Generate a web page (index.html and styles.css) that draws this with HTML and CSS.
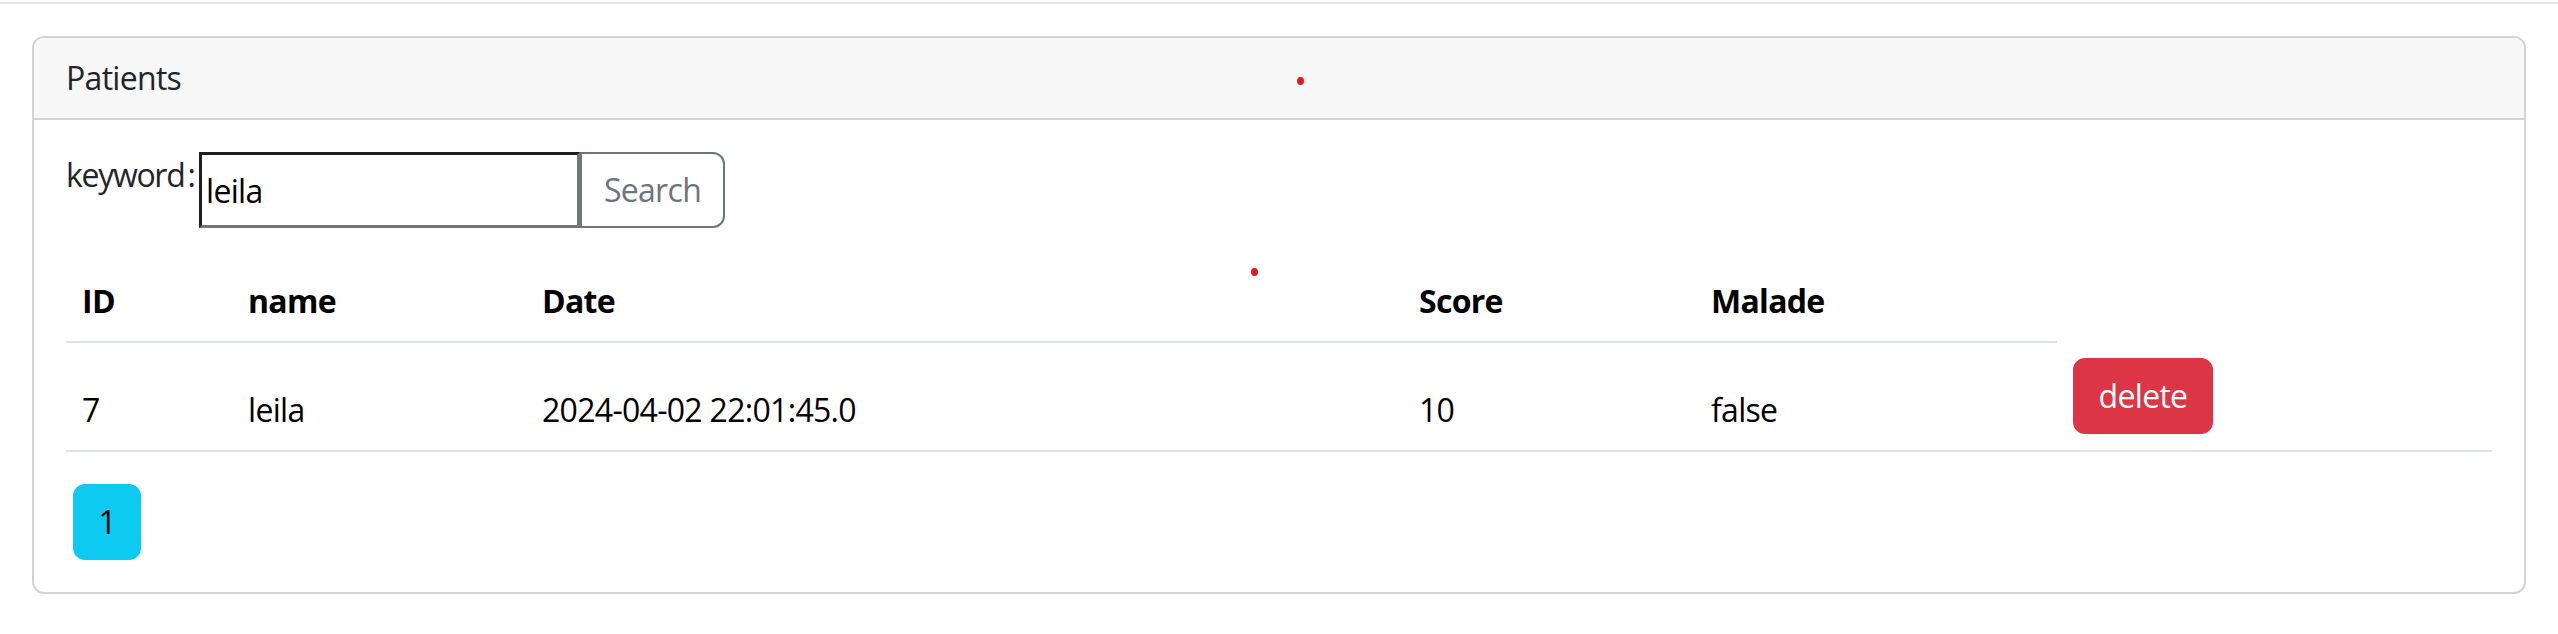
FILE: index.html
```html
<!DOCTYPE html>
<html lang="fr">
<head>
<meta charset="utf-8">
<title>Patients</title>
<link rel="stylesheet" href="styles.css">
</head>
<body>
<div class="topline"></div>
<div class="container">
  <div class="card">
    <div class="card-header">Patients</div>
    <div class="card-body">
      <form class="search">
        <label class="kw-label">keyword :</label>
        <input class="kw-input" type="text" value="leila">
        <button class="btn-search" type="button">Search</button>
      </form>
      <table class="table">
        <colgroup>
          <col class="c-id"><col class="c-name"><col class="c-date"><col class="c-score"><col class="c-malade"><col class="c-act">
        </colgroup>
        <thead>
          <tr><th>ID</th><th>name</th><th>Date</th><th>Score</th><th>Malade</th></tr>
        </thead>
        <tbody>
          <tr>
            <td>7</td>
            <td>leila</td>
            <td>2024-04-02 22:01:45.0</td>
            <td>10</td>
            <td>false</td>
            <td class="act"><a class="btn-delete">delete</a></td>
          </tr>
        </tbody>
      </table>
      <div class="pages"><a class="page-btn">1</a></div>
    </div>
  </div>
</div>
<span class="dot dot-a"></span>
<span class="dot dot-b"></span>
</body>
</html>
```
FILE: styles.css
```css
* { box-sizing: border-box; }
html, body { margin: 0; padding: 0; background: #fff; }
body {
  position: relative;
  font-family: "Segoe UI", "Open Sans", sans-serif;
  font-size: 32px;
  line-height: 48px;
  letter-spacing: -0.7px;
  color: #212529;
}
.topline {
  margin-top: 2px;
  height: 2px;
  background: #e4e4e4;
}
.container {
  padding: 0 32px;
  margin-top: 32px;
}
.card {
  border: 2px solid #d3d3d3;
  border-radius: 12px;
  overflow: hidden;
}
.card-header {
  background: #f7f7f7;
  padding: 16px 32px;
  border-bottom: 2px solid #d3d3d3;
}
.card-body {
  padding: 32px;
}
.search {
  display: flex;
  align-items: flex-start;
  height: 76px;
  margin: 0 0 33px 0;
}
.kw-label {
  flex: 0 0 133px;
  min-width: 0;
  white-space: nowrap;
  line-height: 48px;
  margin-top: -1px;
  letter-spacing: -1.3px;
  word-spacing: -4px;
}
.kw-input {
  flex: 0 0 381px;
  width: 381px;
  height: 76px;
  border-style: solid;
  border-width: 3px;
  border-color: #1f1f1f #767676 #767676 #1f1f1f;
  padding: 2px 4px;
  font: inherit;
  letter-spacing: inherit;
  color: #000;
  background: #fff;
  outline: none;
  border-radius: 0;
  position: relative;
}
.btn-search {
  flex: 0 0 145px;
  width: 145px;
  height: 76px;
  border: 2px solid #6c757d;
  border-radius: 0 12px 12px 0;
  background: #fff;
  color: #6c757d;
  font: inherit;
  letter-spacing: inherit;
  line-height: 48px;
  padding: 0;
  margin-left: 0;
}
.table {
  width: 100%;
  border-collapse: collapse;
  table-layout: fixed;
  margin-bottom: 32px;
}
.c-id { width: 166px; }
.c-name { width: 294px; }
.c-date { width: 877px; }
.c-score { width: 292px; }
.c-malade { width: 362px; }
.c-act { width: 435px; }
.table th, .table td {
  padding: 16px;
  text-align: left;
  border-bottom: 2px solid #dee2e6;
  vertical-align: bottom;
  line-height: 48px;
  white-space: nowrap;
}
.table th {
  font-weight: 700;
  color: #000;
}
.table td { color: #000; }
.table td.act { vertical-align: top; }
.btn-delete {
  display: inline-block;
  width: 140px;
  height: 76px;
  line-height: 48px;
  padding: 12px 0;
  text-align: center;
  background: #dc3545;
  border: 2px solid #dc3545;
  border-radius: 12px;
  color: #fff;
  vertical-align: top;
}
.pages {
  display: flex;
  height: 76px;
}
.page-btn {
  display: block;
  margin-left: 7px;
  width: 68px;
  height: 76px;
  padding: 12px 0;
  line-height: 48px;
  text-align: center;
  background: #0dcaf0;
  border: 2px solid #0dcaf0;
  border-radius: 12px;
  color: #000;
}
.dot {
  position: absolute;
  width: 7px;
  height: 8px;
  border-radius: 50%;
  background: #e31b1b;
}
.dot-a { left: 1297px; top: 77px; }
.dot-b { left: 1251px; top: 268px; }
```
